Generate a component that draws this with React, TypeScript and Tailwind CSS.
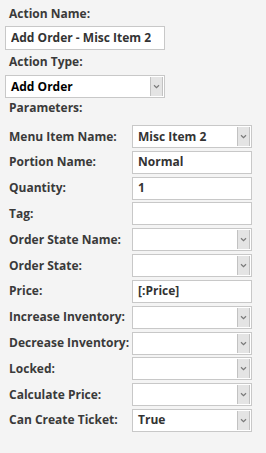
const font = { fontFamily: '"Open Sans", "Noto Sans", sans-serif' };

function Chevron() {
  return (
    <svg width="7" height="5" viewBox="0 0 7 5" className="block">
      <path d="M1 1.2 L3.5 3.6 L6 1.2" fill="none" stroke="#7a7a7a" strokeWidth="1.2" />
    </svg>
  );
}

function TextBox({ value, className = '' }: { value?: string; className?: string }) {
  return (
    <div className={`h-[23px] border border-[#c8c8c8] bg-white flex items-center px-[5px] text-[#333] ${className}`}>
      <span className="truncate">{value}</span>
    </div>
  );
}

function Combo({ value, className = '', dark = false }: { value?: string; className?: string; dark?: boolean }) {
  return (
    <div className={`h-[23px] border border-[#c8c8c8] bg-white flex items-stretch ${className}`}>
      <span className={`flex-1 flex items-center pl-[5px] truncate ${dark ? 'text-black pl-[3px]' : 'text-[#333]'}`}>{value}</span>
      <span className="w-[13px] my-[1px] mr-[1px] bg-[#e4e4e4] border-x border-[#c2c2c2] flex items-center justify-center">
        <Chevron />
      </span>
    </div>
  );
}

type Param = { label: string; kind: 'text' | 'combo'; value?: string };

const params: Param[] = [
  { label: 'Menu Item Name:', kind: 'combo', value: 'Misc Item 2' },
  { label: 'Portion Name:', kind: 'text', value: 'Normal' },
  { label: 'Quantity:', kind: 'text', value: '1' },
  { label: 'Tag:', kind: 'text' },
  { label: 'Order State Name:', kind: 'combo' },
  { label: 'Order State:', kind: 'combo' },
  { label: 'Price:', kind: 'text', value: '[:Price]' },
  { label: 'Increase Inventory:', kind: 'combo' },
  { label: 'Decrease Inventory:', kind: 'combo' },
  { label: 'Locked:', kind: 'combo' },
  { label: 'Calculate Price:', kind: 'combo' },
  { label: 'Can Create Ticket:', kind: 'combo', value: 'True' },
];

export default function App() {
  return (
    <div
      style={font}
      className="w-[266px] h-[453px] bg-[#f4f4f4] text-[12px] font-bold text-[#3a3a3a] leading-[16px] overflow-hidden"
    >
      <div className="pt-[6px] pl-[9px]">Action Name:</div>
      <TextBox value="Add Order - Misc Item 2" className="ml-[5px] mt-[4px] w-[160px] h-[24px]" />
      <div className="pl-[9px] mt-[4px]">Action Type:</div>
      <Combo value="Add Order" dark className="ml-[5px] mt-[5px] w-[160px] h-[23px]" />
      <div className="pl-[9px] mt-[2px]">Parameters:</div>

      {/* Parameter rows */}
      <div className="mt-[9px] pl-[9px] grid grid-cols-[123px_120px] gap-y-[2.82px]">
        {params.map((p) => (
          <div key={p.label} className="contents">
            <div className="flex items-center h-[23px] whitespace-nowrap">{p.label}</div>
            {p.kind === 'text' ? <TextBox value={p.value} /> : <Combo value={p.value} />}
          </div>
        ))}
      </div>
    </div>
  );
}
